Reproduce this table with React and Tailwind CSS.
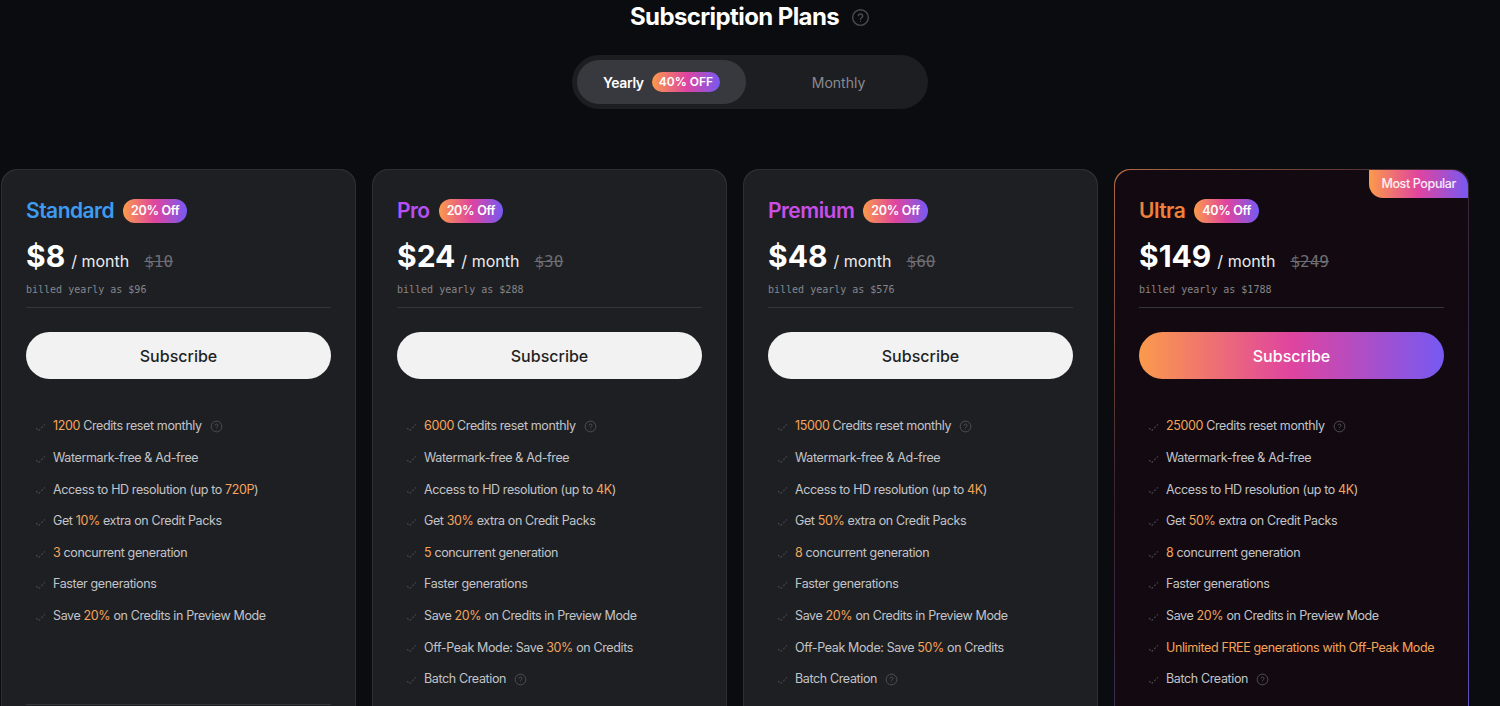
import React from "react";

const plans = [
  {
    name: "Standard",
    color: "text-[#3d9bf0]",
    off: "20% Off",
    price: "$8",
    old: "$10",
    billed: "billed yearly as $96",
    features: [
      [["1200", true], [" Credits reset monthly"]],
      [["Watermark-free & Ad-free"]],
      [["Access to HD resolution (up to "], ["720P", true], [")"]],
      [["Get "], ["10%", true], [" extra on Credit Packs"]],
      [["3", true], [" concurrent generation"]],
      [["Faster generations"]],
      [["Save "], ["20%", true], [" on Credits in Preview Mode"]],
    ],
    help: [0],
  },
  {
    name: "Pro",
    color: "text-[#b74ff2]",
    off: "20% Off",
    price: "$24",
    old: "$30",
    billed: "billed yearly as $288",
    features: [
      [["6000", true], [" Credits reset monthly"]],
      [["Watermark-free & Ad-free"]],
      [["Access to HD resolution (up to "], ["4K", true], [")"]],
      [["Get "], ["30%", true], [" extra on Credit Packs"]],
      [["5", true], [" concurrent generation"]],
      [["Faster generations"]],
      [["Save "], ["20%", true], [" on Credits in Preview Mode"]],
      [["Off-Peak Mode: Save "], ["30%", true], [" on Credits"]],
      [["Batch Creation"]],
    ],
    help: [0, 8],
  },
  {
    name: "Premium",
    color: "text-[#c94ee8]",
    off: "20% Off",
    price: "$48",
    old: "$60",
    billed: "billed yearly as $576",
    features: [
      [["15000", true], [" Credits reset monthly"]],
      [["Watermark-free & Ad-free"]],
      [["Access to HD resolution (up to "], ["4K", true], [")"]],
      [["Get "], ["50%", true], [" extra on Credit Packs"]],
      [["8", true], [" concurrent generation"]],
      [["Faster generations"]],
      [["Save "], ["20%", true], [" on Credits in Preview Mode"]],
      [["Off-Peak Mode: Save "], ["50%", true], [" on Credits"]],
      [["Batch Creation"]],
    ],
    help: [0, 8],
  },
  {
    name: "Ultra",
    color: "text-[#f0803a]",
    off: "40% Off",
    price: "$149",
    old: "$249",
    billed: "billed yearly as $1788",
    popular: true,
    features: [
      [["25000", true], [" Credits reset monthly"]],
      [["Watermark-free & Ad-free"]],
      [["Access to HD resolution (up to "], ["4K", true], [")"]],
      [["Get "], ["50%", true], [" extra on Credit Packs"]],
      [["8", true], [" concurrent generation"]],
      [["Faster generations"]],
      [["Save "], ["20%", true], [" on Credits in Preview Mode"]],
      [["Unlimited FREE generations with Off-Peak Mode", true]],
      [["Batch Creation"]],
    ],
    help: [0, 8],
  },
];

function Help({ className = "" }) {
  return (
    <svg viewBox="0 0 16 16" className={className} fill="none" stroke="currentColor" strokeWidth="1.2">
      <circle cx="8" cy="8" r="6.6" />
      <path d="M6.2 6.3a1.9 1.9 0 0 1 3.7.5c0 1.3-1.9 1.5-1.9 2.6" strokeLinecap="round" />
      <circle cx="8" cy="11.3" r="0.5" fill="currentColor" stroke="none" />
    </svg>
  );
}

function Check() {
  return (
    <svg viewBox="0 0 12 12" className="w-[11px] h-[11px] text-[#45464c]" fill="none" stroke="currentColor" strokeWidth="1.2" strokeLinecap="round" strokeDasharray="1.4 2.6">
      <path d="M1.5 8l2.5 2.5L10.5 4" />
    </svg>
  );
}

const grad = "bg-[linear-gradient(90deg,#fb9a4b_0%,#e0449f_50%,#7659f2_100%)]";

function Card({ plan }) {
  const inner = (
    <div className={`relative w-[353px] rounded-2xl pt-[28px] px-6 pb-10 ${plan.popular ? "bg-[#120a10]" : "bg-[#1e1f23]"}`}>
      {plan.popular && (
        <div className={`absolute top-0 right-0 h-[28px] px-3 flex items-center rounded-bl-[14px] rounded-tr-2xl text-[12.5px] font-medium tracking-[-0.03em] text-white/90 ${grad}`}>
          Most Popular
        </div>
      )}
      <div className="flex items-center gap-[9px] h-[26px]">
        <span className={`text-[21px] font-semibold tracking-tight ${plan.color}`}>{plan.name}</span>
        <span className={`h-[24px] px-2 rounded-full flex items-center text-[12.5px] font-semibold text-white tracking-tight ${grad}`}>{plan.off}</span>
      </div>
      <div className="flex items-baseline mt-[15px] h-[34px]">
        <span className="text-[30px] leading-[34px] font-bold text-white">{plan.price}</span>
        <span className="ml-[6px] text-[16px] text-[#ececec]">/ month</span>
        <span className="ml-[15px] text-[16px] text-[#6c6d72] line-through font-['DejaVu_Sans_Mono',monospace]">{plan.old}</span>
      </div>
      <div className="mt-[9px] text-[10px] text-[#85868b] font-['DejaVu_Sans_Mono',monospace]">{plan.billed}</div>
      <div className="mt-[10px] h-px bg-[#35363b]" />
      <button
        className={`mt-6 w-full h-[47px] rounded-full text-[16px] font-medium ${plan.popular ? `${grad} text-white` : "bg-[#f2f2f2] text-[#1e1f23]"}`}
      >
        Subscribe
      </button>
      <ul className="mt-[32px] flex flex-col">
        {plan.features.map((f, i) => (
          <li key={i} className="h-[31.6px] flex items-center text-[12.5px] tracking-[-0.03em] whitespace-nowrap text-[#c3c4c8]">
            <span className="w-[27px] flex justify-start pl-[9px]">
              <Check />
            </span>
            <span>
              {f.map(([t, hi], j) => (
                <span key={j} className={hi ? "text-[#f4a55b]" : ""}>
                  {t}
                </span>
              ))}
            </span>
            {plan.help.includes(i) && <Help className="ml-2 w-[13px] h-[13px] text-[#4f5056]" />}
          </li>
        ))}
      </ul>
      {plan.features.length < 9 && <div className="mt-[72px] h-px bg-[#35363b]" />}
    </div>
  );
  if (plan.popular) {
    return (
      <div className="rounded-2xl p-px bg-[linear-gradient(135deg,#b06a45_0%,#3a2430_35%,#3b2e5a_65%,#6656c8_100%)]">
        {inner}
      </div>
    );
  }
  return <div className="rounded-2xl p-px bg-[#2e2f34]">{inner}</div>;
}

export default function App() {
  return (
    <div className="h-[706px] bg-[#0b0c10] font-['Inter',sans-serif] overflow-hidden">
      <div className="flex items-center justify-center h-[34px] gap-3">
        <h1 className="text-[24px] font-bold text-white tracking-tight">Subscription Plans</h1>
        <Help className="w-[19px] h-[19px] text-[#4a4b50]" />
      </div>
      <div className="flex justify-center mt-[21px]">
        <div className="w-[356px] h-[54px] rounded-full bg-[#1d1e22] p-[5px] flex">
          <div className="w-[169px] rounded-full bg-[#38393e] flex items-center justify-center gap-[8px]">
            <span className="text-[14px] font-semibold text-white tracking-tight">Yearly</span>
            <span className={`h-[20px] px-[7px] rounded-full flex items-center text-[12px] font-semibold text-white ${grad}`}>40% OFF</span>
          </div>
          <div className="flex-1 flex items-center justify-center pl-2 text-[14px] text-[#8a8b90]">Monthly</div>
        </div>
      </div>
      <div className="flex gap-4 mt-[60px] pl-px">
        {plans.map((p) => (
          <Card key={p.name} plan={p} />
        ))}
      </div>
    </div>
  );
}
